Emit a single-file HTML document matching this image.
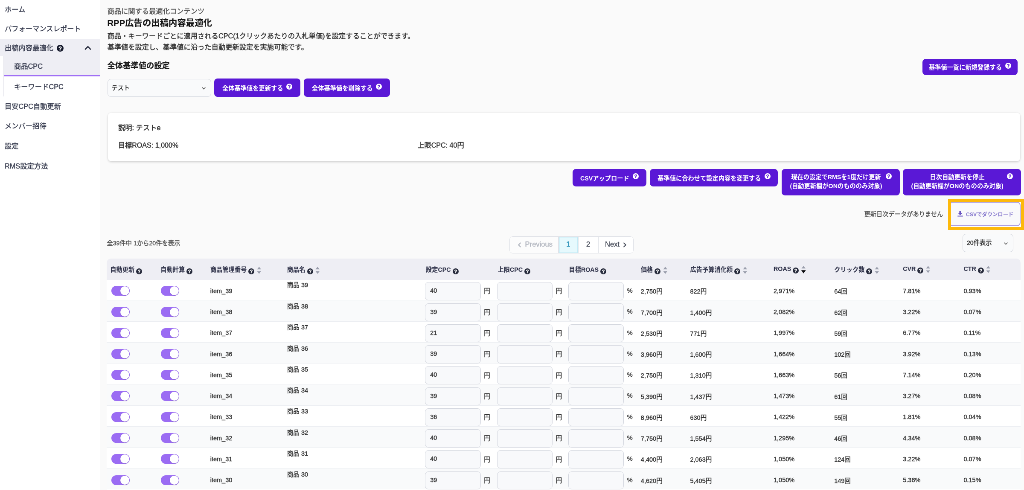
<!DOCTYPE html>
<html lang="ja">
<head>
<meta charset="utf-8">
<title>RPP広告の出稿内容最適化</title>
<style>
:root{--qf:#fff;}
*{box-sizing:border-box;margin:0;padding:0;}
html,body{width:1024px;height:490px;overflow:hidden;background:#fafafa;}
body{font-family:"Liberation Sans","Noto Sans CJK JP",sans-serif;color:#333;}
#stage{will-change:transform;-webkit-text-stroke:0.45px;position:absolute;left:0;top:0;width:2400px;height:1149px;transform:scale(0.4266667);transform-origin:0 0;overflow:hidden;background:#fafafa;}
#side{position:absolute;left:0;top:0;width:234.4px;height:1149px;background:#fff;color:#3c4053;font-size:16.29px;}
#side .it{position:absolute;left:0;width:100%;height:45.4px;line-height:45.4px;padding-left:11px;white-space:nowrap;}
#side .grp{position:absolute;left:0;top:90.8px;width:100%;height:40.6px;line-height:40.6px;background:#eeeef4;padding-left:11px;white-space:nowrap;}
#side .grp span{vertical-align:middle;}
#side .grp .q{width:16px;height:16px;vertical-align:middle;margin-left:8px;color:#14182b;}
#side .grp .chev{position:absolute;left:190px;top:8px;width:32px;height:26px;}
#side .sub{position:absolute;left:7.5px;top:131.4px;width:226.9px;height:95px;border-left:1px solid #e6e6ec;}
#side .si{display:block;height:47px;line-height:49px;padding-left:24.5px;white-space:nowrap;}
#side .si.act{background:#eeeef4;border-bottom:3.2px solid #a070f5;height:47.4px;}
.q{display:inline-block;width:14px;height:14px;}
#main{position:absolute;left:234.4px;top:0;width:2165.6px;height:1149px;}
#main>*{position:absolute;}
.crumb{left:17px;top:14px;font-size:16.29px;line-height:24px;color:#555;white-space:nowrap;}
h1{-webkit-text-stroke:0.2px;left:17px;top:40px;font-size:20.36px;line-height:28px;font-weight:700;color:#141414;white-space:nowrap;}
.desc{left:17px;top:72px;font-size:16.29px;line-height:25.8px;color:#333;white-space:nowrap;}
h2{-webkit-text-stroke:0.2px;left:17px;top:140px;font-size:18.32px;line-height:27px;font-weight:700;color:#1a1a1a;white-space:nowrap;}
.sel{background:#f9fafb;border:1.2px solid #d6d9e0;border-radius:8px;font-size:14.25px;color:#333;}
.sel span{position:absolute;left:8.5px;top:0;line-height:41px;white-space:nowrap;}
.sel svg{position:absolute;right:8px;top:12.5px;width:17px;height:17px;}
#sel1{left:17.6px;top:184.6px;width:243px;height:42.7px;}
#sel2{left:2022px;top:548px;width:118.7px;height:42.5px;}
.btn{border:0;background:#5a18d6;color:#fff;font-family:inherit;font-size:14.25px;font-weight:700;-webkit-text-stroke:0;border-radius:8px;height:43px;white-space:nowrap;display:flex;align-items:center;justify-content:center;padding:0 16px;}
.btn .q{color:#fff;--qf:#5a18d6;margin-left:8px;margin-top:-6px;flex:none;}
.btn.sm{height:38px;}
.btn.two{height:62px;line-height:21px;text-align:center;align-items:flex-start;padding-top:9px;}
.btn.two .q{margin-top:1px;}
#b1{left:267.8px;top:184.3px;width:202px;}
#b2{left:478px;top:184.3px;width:201.6px;}
#b3{left:1927.7px;top:137.7px;width:222.7px;}
#b4{left:1107.4px;top:395.5px;width:173.4px;height:41.5px;}
#b5{left:1289px;top:395.5px;width:300px;height:41.5px;}
#b6{left:1597.8px;top:395.5px;width:276.5px;}
#b7{left:1882px;top:395.5px;width:276.5px;}
.card{left:18.6px;top:263.7px;width:2138px;height:114.3px;background:#fff;border-radius:8px;box-shadow:0 2px 5px rgba(0,0,0,.15),0 0 1.5px rgba(0,0,0,.12);}
.card div{position:absolute;white-space:nowrap;color:#333;}
.card .c1{left:24px;top:23px;font-size:16.29px;line-height:24px;}
.card .c2{left:24px;top:64.6px;font-size:16.1px;line-height:24px;}
.card .c3{left:725.5px;top:64.6px;font-size:16.1px;line-height:24px;}
.nodata{left:1791px;top:492px;font-size:14.25px;line-height:21px;color:#4d4d4d;-webkit-text-stroke:0.3px;white-space:nowrap;}
.hl{left:1988px;top:465.8px;width:177.6px;height:73.3px;border:7.2px solid #fdb90b;background:#fff;overflow:hidden;}
.dl{position:absolute;left:-4px;top:0.6px;width:166.6px;height:57px;background:#f9f9fb;border:2.3px solid #ada0e2;-webkit-text-stroke:0;border-radius:8px;font-family:inherit;font-size:12.3px;font-weight:700;color:#8577cd;display:flex;align-items:center;justify-content:flex-start;padding-left:16px;white-space:nowrap;}
.dl svg{width:15px;height:15px;margin-right:5.5px;margin-top:-2px;flex:none;}
.count{left:16px;top:560.4px;font-size:14.25px;line-height:21px;color:#555;white-space:nowrap;}
.pager{left:959.6px;top:553.7px;width:291.4px;height:40.3px;border:1px solid #dcdfe5;border-radius:8px;background:#fff;font-size:16.6px;color:#4a4f5c;overflow:hidden;display:flex;}
.pager span{display:flex;align-items:center;justify-content:center;height:100%;padding-bottom:2.5px;border-right:2.2px solid #dfe2e8;white-space:nowrap;}
.pager svg{width:9px;height:14px;flex:none;position:relative;top:1px;}
.pager .pv{width:115.5px;color:#b3b7c0;background:#fcfcfc;}
.pager .pv svg{margin-right:9px;margin-left:5px;}
.pager .p1{width:47px;background:#e6f9fd;color:#2f93ba;box-shadow:inset 0 0 0 1.5px #c4ebf6;}
.pager .p2{width:47px;}
.pager .nx{width:82px;border-right:0;}
.pager .nx svg{margin-left:8px;}
.tw{left:16.1px;top:606.4px;width:2141.3px;height:560px;border-radius:10px 10px 0 0;overflow:hidden;background:#fff;}
table{border-collapse:collapse;table-layout:fixed;width:2141.3px;font-size:14.5px;color:#333;}
th{-webkit-text-stroke:0.1px;height:49.4px;background:#eeeef4;text-align:left;padding:1.2px 0 0 10px;font-size:14.25px;font-weight:700;color:#30334a;white-space:nowrap;vertical-align:middle;}
th:first-child{padding-left:7.7px;}
th .q{color:#272b3c;margin-left:4px;vertical-align:-5.5px;}
th .sort{width:12.5px;height:27px;vertical-align:-2px;margin:-8px 0 -8px 4.5px;}
td{height:49.25px;padding:5.2px 0 0 10px;vertical-align:middle;white-space:nowrap;border-top:1px solid #eceef2;}
tbody tr:nth-child(even) td{background:#f9fafb;}
tbody tr:first-child td{border-top:0;height:48.05px;padding-top:3.95px;}
.tg{display:inline-block;position:relative;width:42.8px;height:23.4px;border-radius:13px;margin-left:0.8px;background:#9b6cf3;vertical-align:middle;}
.tg i{position:absolute;right:1.2px;top:1.2px;width:21px;height:21px;box-shadow:0 1px 2px rgba(40,20,90,.25);border-radius:50%;background:#fff;}
td.nm{vertical-align:top;}
td.nm div{margin-top:-1.5px;line-height:21px;}
td.inp{padding-left:10px;}
.in{display:inline-block;position:relative;top:0.8px;margin-left:-1.8px;width:130.4px;height:42.4px;line-height:39.6px;border:1.4px solid #d3d6de;border-radius:8px;background:#f8f9fb;padding-left:11px;vertical-align:middle;color:#333;}
.u{display:inline-block;position:relative;top:-0.8px;margin-left:7.7px;vertical-align:middle;}

</style>
</head>
<body>
<div id="stage">
<nav id="side">
  <a class="it" style="top:0">ホーム</a>
  <a class="it" style="top:45.4px">パフォーマンスレポート</a>
  <div class="grp"><span>出稿内容最適化</span><svg class="q" viewBox="0 0 14 14"><circle cx="7" cy="7" r="7" fill="currentColor"/><text x="7" y="11" text-anchor="middle" font-size="11" font-weight="700" fill="var(--qf)" stroke="var(--qf)" stroke-width="0.5" font-family="Liberation Sans, sans-serif">?</text></svg><svg class="chev" viewBox="0 0 24 24"><path d="M6.5 15 L12 9.5 L17.5 15" fill="none" stroke="#2b2f42" stroke-width="2.6" stroke-linecap="round" stroke-linejoin="round"/></svg></div>
  <div class="sub">
    <a class="si act">商品CPC</a>
    <a class="si">キーワードCPC</a>
  </div>
  <a class="it" style="top:226.6px">目安CPC自動更新</a>
  <a class="it" style="top:273.4px">メンバー招待</a>
  <a class="it" style="top:320.3px">設定</a>
  <a class="it" style="top:367.2px">RMS設定方法</a>
</nav>
<main id="main">
  <div class="crumb">商品に関する最適化コンテンツ</div>
  <h1>RPP広告の出稿内容最適化</h1>
  <p class="desc">商品・キーワードごとに適用されるCPC(1クリックあたりの入札単価)を設定することができます。<br>基準値を設定し、基準値に沿った自動更新設定を実施可能です。</p>
  <h2>全体基準値の設定</h2>
  <div class="sel" id="sel1"><span>テスト</span><svg viewBox="0 0 24 24"><path d="M7 10 L12 15 L17 10" fill="none" stroke="#555" stroke-width="2" stroke-linecap="round" stroke-linejoin="round"/></svg></div>
  <button class="btn" id="b1"><span>全体基準値を更新する</span><svg class="q" viewBox="0 0 14 14"><circle cx="7" cy="7" r="7" fill="currentColor"/><text x="7" y="11" text-anchor="middle" font-size="11" font-weight="700" fill="var(--qf)" stroke="var(--qf)" stroke-width="0.5" font-family="Liberation Sans, sans-serif">?</text></svg></button>
  <button class="btn" id="b2"><span>全体基準値を削除する</span><svg class="q" viewBox="0 0 14 14"><circle cx="7" cy="7" r="7" fill="currentColor"/><text x="7" y="11" text-anchor="middle" font-size="11" font-weight="700" fill="var(--qf)" stroke="var(--qf)" stroke-width="0.5" font-family="Liberation Sans, sans-serif">?</text></svg></button>
  <button class="btn sm" id="b3"><span>基準値一覧に新規登録する</span><svg class="q" viewBox="0 0 14 14"><circle cx="7" cy="7" r="7" fill="currentColor"/><text x="7" y="11" text-anchor="middle" font-size="11" font-weight="700" fill="var(--qf)" stroke="var(--qf)" stroke-width="0.5" font-family="Liberation Sans, sans-serif">?</text></svg></button>

  <section class="card">
    <div class="c1">説明: テストe</div>
    <div class="c2">目標ROAS: 1,000%</div>
    <div class="c3">上限CPC: 40円</div>
  </section>

  <button class="btn" id="b4"><span>CSVアップロード</span><svg class="q" viewBox="0 0 14 14"><circle cx="7" cy="7" r="7" fill="currentColor"/><text x="7" y="11" text-anchor="middle" font-size="11" font-weight="700" fill="var(--qf)" stroke="var(--qf)" stroke-width="0.5" font-family="Liberation Sans, sans-serif">?</text></svg></button>
  <button class="btn" id="b5"><span>基準値に合わせて設定内容を変更する</span><svg class="q" viewBox="0 0 14 14"><circle cx="7" cy="7" r="7" fill="currentColor"/><text x="7" y="11" text-anchor="middle" font-size="11" font-weight="700" fill="var(--qf)" stroke="var(--qf)" stroke-width="0.5" font-family="Liberation Sans, sans-serif">?</text></svg></button>
  <button class="btn two" id="b6"><span>現在の設定でRMSを1度だけ更新<br>(自動更新欄がONのもののみ対象)</span><svg class="q" viewBox="0 0 14 14"><circle cx="7" cy="7" r="7" fill="currentColor"/><text x="7" y="11" text-anchor="middle" font-size="11" font-weight="700" fill="var(--qf)" stroke="var(--qf)" stroke-width="0.5" font-family="Liberation Sans, sans-serif">?</text></svg></button>
  <button class="btn two" id="b7"><span>日次自動更新を停止<br>(自動更新欄がONのもののみ対象)</span><svg class="q" viewBox="0 0 14 14"><circle cx="7" cy="7" r="7" fill="currentColor"/><text x="7" y="11" text-anchor="middle" font-size="11" font-weight="700" fill="var(--qf)" stroke="var(--qf)" stroke-width="0.5" font-family="Liberation Sans, sans-serif">?</text></svg></button>

  <div class="nodata">更新日次データがありません</div>
  <div class="hl"><button class="dl"><svg viewBox="0 0 12 12"><path d="M4.3 0.8 H7.7 V5 H10.2 L6 9.2 L1.8 5 H4.3 Z M1 10 H11 V11.6 H1 Z" fill="#6a55c2"/></svg><span>CSVでダウンロード</span></button></div>

  <div class="count">全39件中 1から20件を表示</div>
  <div class="pager"><span class="pv"><svg viewBox="0 0 9 14"><path d="M6.8 2.5 L2.3 7 L6.8 11.5" fill="none" stroke="#b3b7c0" stroke-width="2.4" stroke-linecap="round" stroke-linejoin="round"/></svg>Previous</span><span class="p1">1</span><span class="p2">2</span><span class="nx">Next<svg viewBox="0 0 9 14"><path d="M2.2 2.5 L6.7 7 L2.2 11.5" fill="none" stroke="#4a4f5c" stroke-width="2.4" stroke-linecap="round" stroke-linejoin="round"/></svg></span></div>
  <div class="sel" id="sel2"><span>20件表示</span><svg viewBox="0 0 24 24"><path d="M7 10 L12 15 L17 10" fill="none" stroke="#555" stroke-width="2" stroke-linecap="round" stroke-linejoin="round"/></svg></div>

  <div class="tw">
  <table>
    <colgroup>
      <col style="width:115.7px"><col style="width:116.5px"><col style="width:180.2px"><col style="width:325.1px">
      <col style="width:168.5px"><col style="width:167px"><col style="width:168.4px"><col style="width:115.6px">
      <col style="width:195.6px"><col style="width:142.1px"><col style="width:161.1px"><col style="width:142.2px"><col style="width:143.8px">
    </colgroup>
    <thead>
      <tr>
        <th>自動更新<svg class="q" viewBox="0 0 14 14"><circle cx="7" cy="7" r="7" fill="currentColor"/><text x="7" y="11" text-anchor="middle" font-size="11" font-weight="700" fill="var(--qf)" stroke="var(--qf)" stroke-width="0.5" font-family="Liberation Sans, sans-serif">?</text></svg></th>
        <th>自動計算<svg class="q" viewBox="0 0 14 14"><circle cx="7" cy="7" r="7" fill="currentColor"/><text x="7" y="11" text-anchor="middle" font-size="11" font-weight="700" fill="var(--qf)" stroke="var(--qf)" stroke-width="0.5" font-family="Liberation Sans, sans-serif">?</text></svg></th>
        <th>商品管理番号<svg class="q" viewBox="0 0 14 14"><circle cx="7" cy="7" r="7" fill="currentColor"/><text x="7" y="11" text-anchor="middle" font-size="11" font-weight="700" fill="var(--qf)" stroke="var(--qf)" stroke-width="0.5" font-family="Liberation Sans, sans-serif">?</text></svg><svg class="sort" viewBox="0 0 10 20"><path d="M1.2 8.2 L5 3.4 L8.8 8.2 Z M1.2 11.8 L5 16.6 L8.8 11.8 Z" fill="#9a9eac"/></svg></th>
        <th>商品名<svg class="q" viewBox="0 0 14 14"><circle cx="7" cy="7" r="7" fill="currentColor"/><text x="7" y="11" text-anchor="middle" font-size="11" font-weight="700" fill="var(--qf)" stroke="var(--qf)" stroke-width="0.5" font-family="Liberation Sans, sans-serif">?</text></svg><svg class="sort" viewBox="0 0 10 20"><path d="M1.2 8.2 L5 3.4 L8.8 8.2 Z M1.2 11.8 L5 16.6 L8.8 11.8 Z" fill="#9a9eac"/></svg></th>
        <th>設定CPC<svg class="q" viewBox="0 0 14 14"><circle cx="7" cy="7" r="7" fill="currentColor"/><text x="7" y="11" text-anchor="middle" font-size="11" font-weight="700" fill="var(--qf)" stroke="var(--qf)" stroke-width="0.5" font-family="Liberation Sans, sans-serif">?</text></svg></th>
        <th>上限CPC<svg class="q" viewBox="0 0 14 14"><circle cx="7" cy="7" r="7" fill="currentColor"/><text x="7" y="11" text-anchor="middle" font-size="11" font-weight="700" fill="var(--qf)" stroke="var(--qf)" stroke-width="0.5" font-family="Liberation Sans, sans-serif">?</text></svg></th>
        <th>目標ROAS<svg class="q" viewBox="0 0 14 14"><circle cx="7" cy="7" r="7" fill="currentColor"/><text x="7" y="11" text-anchor="middle" font-size="11" font-weight="700" fill="var(--qf)" stroke="var(--qf)" stroke-width="0.5" font-family="Liberation Sans, sans-serif">?</text></svg></th>
        <th>価格<svg class="q" viewBox="0 0 14 14"><circle cx="7" cy="7" r="7" fill="currentColor"/><text x="7" y="11" text-anchor="middle" font-size="11" font-weight="700" fill="var(--qf)" stroke="var(--qf)" stroke-width="0.5" font-family="Liberation Sans, sans-serif">?</text></svg><svg class="sort" viewBox="0 0 10 20"><path d="M1.2 8.2 L5 3.4 L8.8 8.2 Z M1.2 11.8 L5 16.6 L8.8 11.8 Z" fill="#9a9eac"/></svg></th>
        <th>広告予算消化額<svg class="q" viewBox="0 0 14 14"><circle cx="7" cy="7" r="7" fill="currentColor"/><text x="7" y="11" text-anchor="middle" font-size="11" font-weight="700" fill="var(--qf)" stroke="var(--qf)" stroke-width="0.5" font-family="Liberation Sans, sans-serif">?</text></svg><svg class="sort" viewBox="0 0 10 20"><path d="M1.2 8.2 L5 3.4 L8.8 8.2 Z M1.2 11.8 L5 16.6 L8.8 11.8 Z" fill="#9a9eac"/></svg></th>
        <th>ROAS<svg class="q" viewBox="0 0 14 14"><circle cx="7" cy="7" r="7" fill="currentColor"/><text x="7" y="11" text-anchor="middle" font-size="11" font-weight="700" fill="var(--qf)" stroke="var(--qf)" stroke-width="0.5" font-family="Liberation Sans, sans-serif">?</text></svg><svg class="sort" viewBox="0 0 10 20"><path d="M1.2 8.2 L5 3.4 L8.8 8.2 Z" fill="#9a9eac"/><path d="M0.6 11.4 L5 17.4 L9.4 11.4 Z" fill="#0c0c10"/></svg></th>
        <th>クリック数<svg class="q" viewBox="0 0 14 14"><circle cx="7" cy="7" r="7" fill="currentColor"/><text x="7" y="11" text-anchor="middle" font-size="11" font-weight="700" fill="var(--qf)" stroke="var(--qf)" stroke-width="0.5" font-family="Liberation Sans, sans-serif">?</text></svg><svg class="sort" viewBox="0 0 10 20"><path d="M1.2 8.2 L5 3.4 L8.8 8.2 Z M1.2 11.8 L5 16.6 L8.8 11.8 Z" fill="#9a9eac"/></svg></th>
        <th>CVR<svg class="q" viewBox="0 0 14 14"><circle cx="7" cy="7" r="7" fill="currentColor"/><text x="7" y="11" text-anchor="middle" font-size="11" font-weight="700" fill="var(--qf)" stroke="var(--qf)" stroke-width="0.5" font-family="Liberation Sans, sans-serif">?</text></svg><svg class="sort" viewBox="0 0 10 20"><path d="M1.2 8.2 L5 3.4 L8.8 8.2 Z M1.2 11.8 L5 16.6 L8.8 11.8 Z" fill="#9a9eac"/></svg></th>
        <th>CTR<svg class="q" viewBox="0 0 14 14"><circle cx="7" cy="7" r="7" fill="currentColor"/><text x="7" y="11" text-anchor="middle" font-size="11" font-weight="700" fill="var(--qf)" stroke="var(--qf)" stroke-width="0.5" font-family="Liberation Sans, sans-serif">?</text></svg><svg class="sort" viewBox="0 0 10 20"><path d="M1.2 8.2 L5 3.4 L8.8 8.2 Z M1.2 11.8 L5 16.6 L8.8 11.8 Z" fill="#9a9eac"/></svg></th>
      </tr>
    </thead>
    <tbody>
<tr>
<td><span class="tg"><i></i></span></td>
<td><span class="tg"><i></i></span></td>
<td>item_39</td>
<td class="nm"><div>商品 39</div></td>
<td class="inp"><span class="in">40</span><span class="u">円</span></td>
<td class="inp"><span class="in"></span><span class="u">円</span></td>
<td class="inp"><span class="in"></span><span class="u">%</span></td>
<td>2,750円</td>
<td>822円</td>
<td>2,971%</td>
<td>64回</td>
<td>7.81%</td>
<td>0.93%</td>
</tr>
<tr>
<td><span class="tg"><i></i></span></td>
<td><span class="tg"><i></i></span></td>
<td>item_38</td>
<td class="nm"><div>商品 38</div></td>
<td class="inp"><span class="in">39</span><span class="u">円</span></td>
<td class="inp"><span class="in"></span><span class="u">円</span></td>
<td class="inp"><span class="in"></span><span class="u">%</span></td>
<td>7,700円</td>
<td>1,400円</td>
<td>2,082%</td>
<td>62回</td>
<td>3.22%</td>
<td>0.07%</td>
</tr>
<tr>
<td><span class="tg"><i></i></span></td>
<td><span class="tg"><i></i></span></td>
<td>item_37</td>
<td class="nm"><div>商品 37</div></td>
<td class="inp"><span class="in">21</span><span class="u">円</span></td>
<td class="inp"><span class="in"></span><span class="u">円</span></td>
<td class="inp"><span class="in"></span><span class="u">%</span></td>
<td>2,530円</td>
<td>771円</td>
<td>1,997%</td>
<td>59回</td>
<td>6.77%</td>
<td>0.11%</td>
</tr>
<tr>
<td><span class="tg"><i></i></span></td>
<td><span class="tg"><i></i></span></td>
<td>item_36</td>
<td class="nm"><div>商品 36</div></td>
<td class="inp"><span class="in">39</span><span class="u">円</span></td>
<td class="inp"><span class="in"></span><span class="u">円</span></td>
<td class="inp"><span class="in"></span><span class="u">%</span></td>
<td>3,960円</td>
<td>1,600円</td>
<td>1,664%</td>
<td>102回</td>
<td>3.92%</td>
<td>0.13%</td>
</tr>
<tr>
<td><span class="tg"><i></i></span></td>
<td><span class="tg"><i></i></span></td>
<td>item_35</td>
<td class="nm"><div>商品 35</div></td>
<td class="inp"><span class="in">40</span><span class="u">円</span></td>
<td class="inp"><span class="in"></span><span class="u">円</span></td>
<td class="inp"><span class="in"></span><span class="u">%</span></td>
<td>2,750円</td>
<td>1,310円</td>
<td>1,663%</td>
<td>56回</td>
<td>7.14%</td>
<td>0.20%</td>
</tr>
<tr>
<td><span class="tg"><i></i></span></td>
<td><span class="tg"><i></i></span></td>
<td>item_34</td>
<td class="nm"><div>商品 34</div></td>
<td class="inp"><span class="in">39</span><span class="u">円</span></td>
<td class="inp"><span class="in"></span><span class="u">円</span></td>
<td class="inp"><span class="in"></span><span class="u">%</span></td>
<td>5,390円</td>
<td>1,437円</td>
<td>1,473%</td>
<td>61回</td>
<td>3.27%</td>
<td>0.08%</td>
</tr>
<tr>
<td><span class="tg"><i></i></span></td>
<td><span class="tg"><i></i></span></td>
<td>item_33</td>
<td class="nm"><div>商品 33</div></td>
<td class="inp"><span class="in">36</span><span class="u">円</span></td>
<td class="inp"><span class="in"></span><span class="u">円</span></td>
<td class="inp"><span class="in"></span><span class="u">%</span></td>
<td>8,960円</td>
<td>630円</td>
<td>1,422%</td>
<td>55回</td>
<td>1.81%</td>
<td>0.04%</td>
</tr>
<tr>
<td><span class="tg"><i></i></span></td>
<td><span class="tg"><i></i></span></td>
<td>item_32</td>
<td class="nm"><div>商品 32</div></td>
<td class="inp"><span class="in">40</span><span class="u">円</span></td>
<td class="inp"><span class="in"></span><span class="u">円</span></td>
<td class="inp"><span class="in"></span><span class="u">%</span></td>
<td>7,750円</td>
<td>1,554円</td>
<td>1,295%</td>
<td>46回</td>
<td>4.34%</td>
<td>0.08%</td>
</tr>
<tr>
<td><span class="tg"><i></i></span></td>
<td><span class="tg"><i></i></span></td>
<td>item_31</td>
<td class="nm"><div>商品 31</div></td>
<td class="inp"><span class="in">40</span><span class="u">円</span></td>
<td class="inp"><span class="in"></span><span class="u">円</span></td>
<td class="inp"><span class="in"></span><span class="u">%</span></td>
<td>4,400円</td>
<td>2,063円</td>
<td>1,050%</td>
<td>124回</td>
<td>3.22%</td>
<td>0.07%</td>
</tr>
<tr>
<td><span class="tg"><i></i></span></td>
<td><span class="tg"><i></i></span></td>
<td>item_30</td>
<td class="nm"><div>商品 30</div></td>
<td class="inp"><span class="in">39</span><span class="u">円</span></td>
<td class="inp"><span class="in"></span><span class="u">円</span></td>
<td class="inp"><span class="in"></span><span class="u">%</span></td>
<td>4,620円</td>
<td>5,405円</td>
<td>1,050%</td>
<td>149回</td>
<td>5.36%</td>
<td>0.15%</td>
</tr>
    </tbody>
  </table>
  </div>
</main>
</div>
</body>
</html>
